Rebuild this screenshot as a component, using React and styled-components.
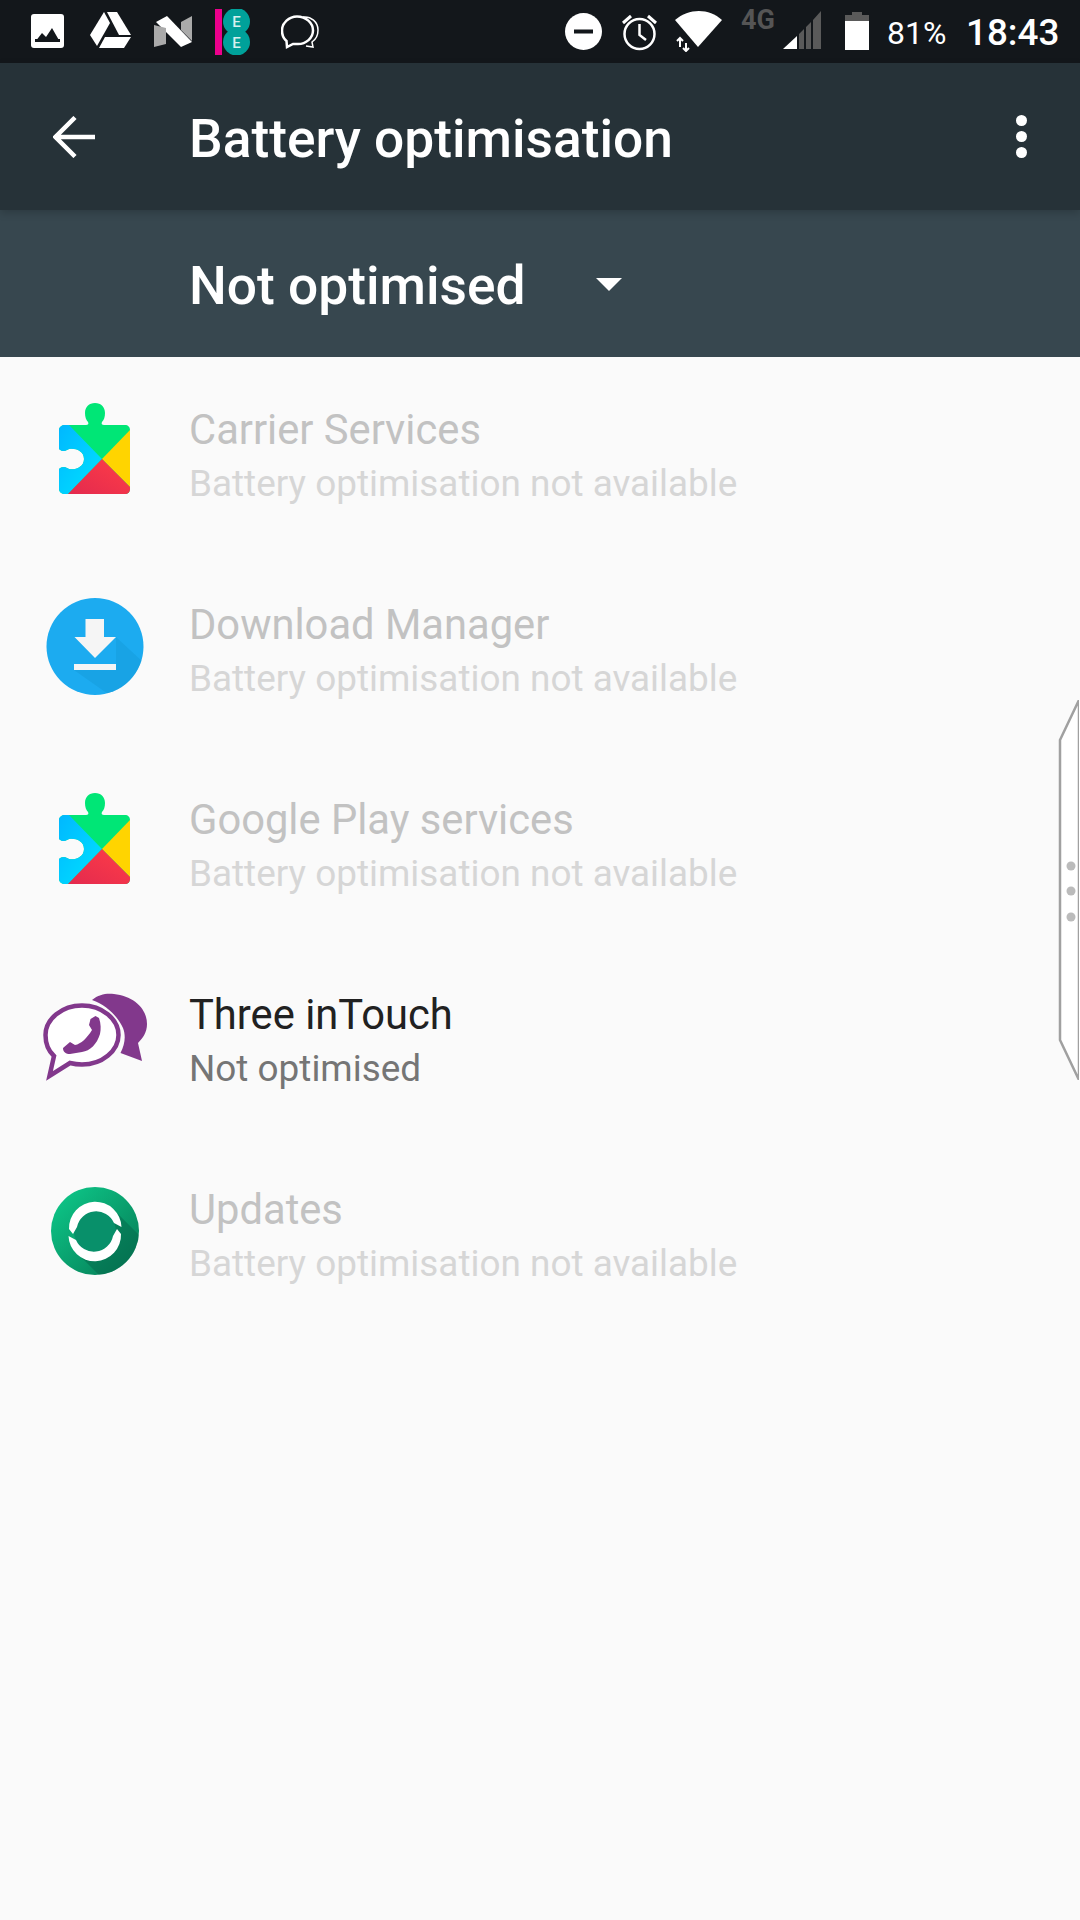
import React from "react";
import styled, { createGlobalStyle } from "styled-components";

const Global = createGlobalStyle`
  html, body {
    margin: 0;
    padding: 0;
    background: #fafafa;
    font-family: Roboto, "Liberation Sans", sans-serif;
  }
`;

const Page = styled.div`
  position: relative;
  width: 1080px;
  height: 1920px;
  overflow: hidden;
  background: #fafafa;
`;

const StatusBar = styled.div`
  height: 63px;
  background: #13171b;
  display: flex;
  align-items: flex-start;
  color: #fff;
`;

const StatusIcon = styled.svg`
  display: block;
  flex: none;
  margin-left: ${(p) => p.$left}px;
  margin-top: ${(p) => p.$top}px;
`;

const FourG = styled.span`
  flex: none;
  margin-left: 18px;
  margin-top: 5px;
  width: 36px;
  font-size: 27px;
  line-height: 30px;
  font-weight: 700;
  color: #555;
`;

const Percent = styled.span`
  flex: none;
  margin-left: 18px;
  margin-top: 15px;
  width: 59px;
  font-size: 32px;
  line-height: 36px;
`;

const Clock = styled.span`
  flex: none;
  margin-left: 20px;
  margin-top: 13px;
  font-size: 36.8px;
  line-height: 40px;
  font-weight: 500;
`;

const Toolbar = styled.div`
  position: relative;
  z-index: 1;
  height: 147px;
  background: #263238;
  display: flex;
  align-items: center;
  box-shadow: 0 3px 8px rgba(0, 0, 0, 0.18);
`;

const BackSlot = styled.div`
  width: 189px;
  flex: none;
  padding-left: 53px;
  box-sizing: border-box;
`;

const Title = styled.h1`
  flex: 1;
  margin: 0;
  padding-top: 5px;
  color: #fff;
  font-size: 53.3px;
  line-height: 60px;
  font-weight: 500;
`;

const MoreDots = styled.div`
  display: flex;
  flex-direction: column;
  gap: 5px;
  margin-right: 53px;

  span {
    width: 11px;
    height: 11px;
    border-radius: 50%;
    background: #fff;
  }
`;

const FilterBar = styled.div`
  height: 147px;
  background: #37474f;
  display: flex;
  align-items: center;
  padding-left: 189px;
`;

const FilterLabel = styled.div`
  padding-top: 5px;
  color: #fff;
  font-size: 53.3px;
  line-height: 60px;
  font-weight: 500;
`;

const Caret = styled.div`
  width: 0;
  height: 0;
  margin-left: 70px;
  margin-top: 2px;
  border-left: 13px solid transparent;
  border-right: 13px solid transparent;
  border-top: 13px solid #fff;
`;

const AppList = styled.div`
  display: flex;
  flex-direction: column;
`;

const Row = styled.div`
  height: 195px;
  display: flex;
  align-items: center;
`;

const IconSlot = styled.div`
  width: 189px;
  flex: none;
  display: flex;
  justify-content: center;
  margin-bottom: 7px;
`;

const AppText = styled.div`
  padding-top: 5px;
`;

const AppName = styled.div`
  font-size: 41.7px;
  line-height: 54px;
  color: ${(p) => (p.$enabled ? "#212121" : "#c2c2c2")};
`;

const AppSummary = styled.div`
  font-size: 36.9px;
  line-height: 54px;
  color: ${(p) => (p.$enabled ? "#757575" : "#d6d6d6")};
`;

const EdgeHandle = styled.svg`
  position: absolute;
  right: 0;
  top: 700px;
`;

const PlayServicesIcon = ({ id }) => (
  <svg width="120" height="120" viewBox="0 0 120 120">
    <defs>
      <clipPath id={id}>
        <path d="M30 34H51C53 34 54 33 53 31C51 29 50 26 50 22C50 16 54 12 60 12C66 12 70 16 70 22C70 26 69 29 67 31C66 33 67 34 69 34H90C93 34 95 36 95 39V98C95 101 93 103 90 103H30C27 103 24 101 24 98V78C26 76 29 75 32 77C36 80 49 78 49 68C49 58 36 56 32 59C29 61 26 60 24 58V39C24 36 27 34 30 34Z" />
      </clipPath>
      <linearGradient id={id + "b"} x1="0" y1="0" x2="1" y2="1">
        <stop offset="0" stopColor="#00b4ff" />
        <stop offset="1" stopColor="#00e5ff" />
      </linearGradient>
      <linearGradient id={id + "r"} x1="0" y1="1" x2="1" y2="0">
        <stop offset="0" stopColor="#e0284f" />
        <stop offset="1" stopColor="#ff3d47" />
      </linearGradient>
    </defs>
    <g clipPath={`url(#${id})`}>
      <rect x="20" y="8" width="80" height="100" fill="#00e676" />
      <polygon points="20,30 34,34 67,68 33,103 20,108" fill={`url(#${id}b)`} />
      <polygon points="96,38 67,68 96,97" fill="#ffd400" />
      <polygon points="33,103 67,68 96,97 96,108 30,108" fill={`url(#${id}r)`} />
    </g>
  </svg>
);

const DownloadIcon = () => (
  <svg width="120" height="120" viewBox="0 0 120 120">
    <defs>
      <clipPath id="dlClip">
        <circle cx="60" cy="60.5" r="48.5" />
      </clipPath>
    </defs>
    <circle cx="60" cy="60.5" r="48.5" fill="#1cabf0" />
    <g clipPath="url(#dlClip)">
      <polygon points="69,40 110,78 110,110 76,110 39,84 81,78 81,51" fill="#1598d8" opacity="0.45" />
    </g>
    <polygon points="50.5,33 69,33 69,51 81,51 60,72 39.5,51 50.5,51" fill="#f5f5f5" />
    <rect x="39" y="78" width="42" height="6" fill="#f5f5f5" />
  </svg>
);

const ThreeIcon = () => (
  <svg width="120" height="120" viewBox="0 0 120 120">
    <path
      d="M57 24C64 18 72 17 79 18C98 20 112 32 112 48C112 56 108 62 103 67L107 85L85.5 77C90 68 91 60 88 52C83 41 72 29 57 24Z"
      fill="#82388c"
    />
    <path
      d="M47 29.5C67 29.5 83.5 43 83.5 59C83.5 75 67 88.5 47 88.5C43 88.5 39 88 35 87L14.5 100L19 80C13.5 75 10.5 67 10.5 59C10.5 43 27 29.5 47 29.5Z"
      fill="#fff"
      stroke="#82388c"
      strokeWidth="4.5"
    />
    <path
      d="M60.5 40L64 42C66 48 66 53 65 58C62 68 55 75 47 76L35 78C31 78 28 76 28 72L35 66L40 69C46 68 52 62 57 54L54 49L55.5 43Z"
      fill="#82388c"
    />
  </svg>
);

const UpdatesIcon = () => (
  <svg width="120" height="120" viewBox="0 0 120 120">
    <defs>
      <linearGradient id="upFill" x1="0" y1="0" x2="1" y2="1">
        <stop offset="0.1" stopColor="#0dc486" />
        <stop offset="0.9" stopColor="#067f58" />
      </linearGradient>
      <clipPath id="upClip">
        <circle cx="60" cy="60" r="44" />
      </clipPath>
    </defs>
    <circle cx="60" cy="60" r="44" fill="url(#upFill)" />
    <g clipPath="url(#upClip)">
      <polygon points="80,40 110,70 110,110 70,110 38,78" fill="#04664a" opacity="0.5" />
    </g>
    <circle cx="60" cy="60.5" r="21" fill="#08906a" />
    <path d="M34 58A26 26 0 0 1 86.5 56L79 52A19.5 19.5 0 0 0 42 56L38 63Z" fill="#fff" />
    <path d="M34 58A26 26 0 0 1 86.5 56L79 52A19.5 19.5 0 0 0 42 56L38 63Z" fill="#fff" transform="rotate(180 60 60.5)" />
  </svg>
);

const apps = [
  { name: "Carrier Services", icon: <PlayServicesIcon id="ps1" /> },
  { name: "Download Manager", icon: <DownloadIcon /> },
  { name: "Google Play services", icon: <PlayServicesIcon id="ps2" /> },
  { name: "Three inTouch", icon: <ThreeIcon />, enabled: true },
  { name: "Updates", icon: <UpdatesIcon /> },
];

const App = () => (
  <Page>
    <Global />
    <StatusBar>
      <StatusIcon $left={31} $top={14} width="33" height="34" viewBox="0 0 33 34">
        <rect width="33" height="34" rx="3" fill="#fff" />
        <path d="M4 28L11 19L15 23L21 14L29 28Z" fill="#13171b" />
        <rect x="4" y="25" width="25" height="3" fill="#13171b" />
      </StatusIcon>
      <StatusIcon $left={26} $top={12} width="41" height="36" viewBox="0 0 41 36">
        <path d="M14 0L20 11L7 34L0 23Z" fill="#fff" />
        <path d="M17 0H27L41 23H29Z" fill="#fff" />
        <path d="M15 25H41L34 36H9Z" fill="#fff" />
      </StatusIcon>
      <StatusIcon $left={23} $top={16} width="39" height="31" viewBox="0 0 39 31">
        <path d="M27 6L38 0V25L27 14Z" fill="#aaa" />
        <path d="M2 6L13 0L38 26L27 31Z" fill="#fff" />
        <path d="M0 9L12 12V28L0 31Z" fill="#aaa" />
      </StatusIcon>
      <StatusIcon $left={22} $top={9} width="36" height="46" viewBox="0 0 36 46">
        <rect width="7" height="46" fill="#ec008c" />
        <circle cx="21.5" cy="12.5" r="13.5" fill="#00a19a" />
        <circle cx="21.5" cy="33" r="13.5" fill="#00a19a" />
        <text x="21.5" y="18" fontSize="15" fontWeight="500" fill="#d6f0ee" textAnchor="middle" fontFamily="Roboto, sans-serif">E</text>
        <text x="21.5" y="38.5" fontSize="15" fontWeight="500" fill="#d6f0ee" textAnchor="middle" fontFamily="Roboto, sans-serif">E</text>
      </StatusIcon>
      <StatusIcon $left={30} $top={15} width="38" height="34" viewBox="0 0 38 34">
        <path d="M22 2C30 1 37 7 37 15C37 21 34 25 31 27L32 32L25 31" fill="none" stroke="#fff" strokeWidth="1.5" />
        <path d="M16 1.5C25 1.5 32 8 32 15.5C32 23 25 29 17 29C15 29 13 29 12 29L6 32L5.5 26C3 24 1 20 1 15.5C1 8 8 1.5 16 1.5Z" fill="none" stroke="#fff" strokeWidth="2.5" />
      </StatusIcon>
      <StatusIcon $left={246} $top={13} width="37" height="37" viewBox="0 0 37 37">
        <circle cx="18.5" cy="18.5" r="18.5" fill="#fff" />
        <rect x="9" y="16.5" width="19" height="4" fill="#13171b" />
      </StatusIcon>
      <StatusIcon $left={19} $top={13} width="37" height="38" viewBox="0 0 37 38">
        <circle cx="18.5" cy="21" r="15" fill="none" stroke="#fff" strokeWidth="2.5" />
        <path d="M18.5 11V22L25 27" fill="none" stroke="#fff" strokeWidth="2.5" />
        <path d="M2 10L10 3M35 10L27 3" fill="none" stroke="#fff" strokeWidth="3" />
      </StatusIcon>
      <StatusIcon $left={17} $top={11} width="48" height="41" viewBox="0 0 48 41">
        <path d="M0 9C14 -3 34 -3 47 9L23 36Z" fill="#fff" />
        <path d="M5 27V36M2 30L5 27L8 30M11 32V40M8 37L11 40L14 37" fill="none" stroke="#fff" strokeWidth="2" />
      </StatusIcon>
      <FourG>4G</FourG>
      <StatusIcon $left={6} $top={10} width="39" height="40" viewBox="0 0 39 40">
        <path d="M0 39L14 26V39Z" fill="#fff" />
        <path d="M16 24L21 19V39H16ZM23 17L28 12V39H23ZM30 10L38 1V39H30Z" fill="#5a5a5a" />
      </StatusIcon>
      <StatusIcon $left={23} $top={12} width="24" height="38" viewBox="0 0 24 38">
        <path d="M7 0H17V3H24V10H0V3H7Z" fill="#5a5a5a" />
        <rect y="9" width="24" height="29" fill="#fff" />
      </StatusIcon>
      <Percent>81%</Percent>
      <Clock>18:43</Clock>
    </StatusBar>
    <Toolbar>
      <BackSlot>
        <svg width="42" height="42" viewBox="0 0 42 42" style={{ display: "block" }}>
          <path d="M42 21H3M22 1.5L2.5 21L22 40.5" fill="none" stroke="#fff" strokeWidth="4.5" />
        </svg>
      </BackSlot>
      <Title>Battery optimisation</Title>
      <MoreDots>
        <span />
        <span />
        <span />
      </MoreDots>
    </Toolbar>
    <FilterBar>
      <FilterLabel>Not optimised</FilterLabel>
      <Caret />
    </FilterBar>
    <AppList>
      {apps.map((app) => (
        <Row key={app.name}>
          <IconSlot>{app.icon}</IconSlot>
          <AppText>
            <AppName $enabled={app.enabled}>{app.name}</AppName>
            <AppSummary $enabled={app.enabled}>
              {app.enabled ? "Not optimised" : "Battery optimisation not available"}
            </AppSummary>
          </AppText>
        </Row>
      ))}
    </AppList>
    <EdgeHandle width="22" height="380" viewBox="0 0 22 380">
      <path d="M21 0L2 40V340L21 380Z" fill="#fff" stroke="#a0a0a0" strokeWidth="2.5" />
      <rect x="21" y="0" width="1" height="380" fill="#fff" />
      <circle cx="13" cy="166" r="4.5" fill="#bbb" />
      <circle cx="13" cy="191" r="4.5" fill="#bbb" />
      <circle cx="13" cy="217" r="4.5" fill="#bbb" />
    </EdgeHandle>
  </Page>
);

export default App;
